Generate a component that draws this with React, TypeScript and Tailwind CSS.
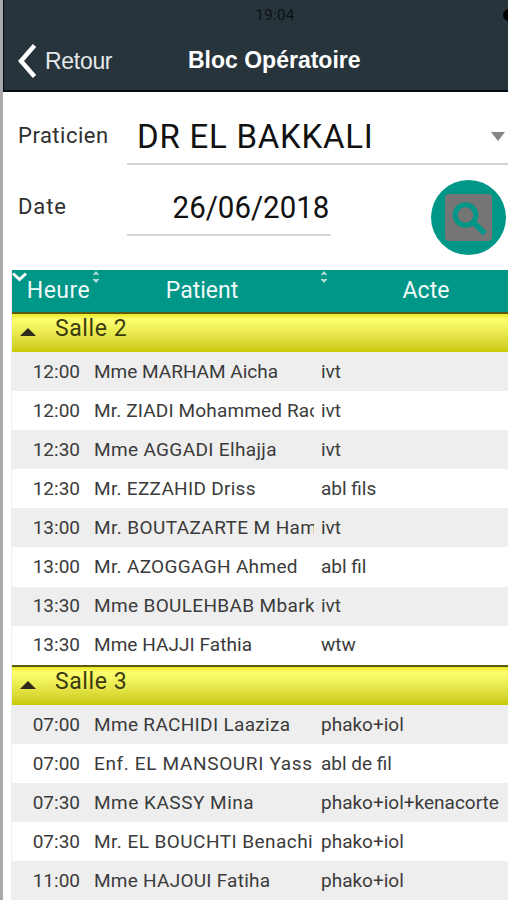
import clsx from 'clsx';

type Entry = {
  time: string;
  patient: string;
  act: string;
  tracking?: string;
};

const rooms: { name: string; entries: Entry[] }[] = [
  {
    name: 'Salle 2',
    entries: [
      { time: '12:00', patient: 'Mme MARHAM Aicha', act: 'ivt' },
      { time: '12:00', patient: 'Mr. ZIADI Mohammed Rac', act: 'ivt', tracking: 'tracking-[0.15px]' },
      { time: '12:30', patient: 'Mme AGGADI Elhajja', act: 'ivt', tracking: 'tracking-[0.35px]' },
      { time: '12:30', patient: 'Mr. EZZAHID Driss', act: 'abl fils', tracking: 'tracking-[0.3px]' },
      { time: '13:00', patient: 'Mr. BOUTAZARTE M Ham', act: 'ivt', tracking: 'tracking-[0.4px]' },
      { time: '13:00', patient: 'Mr. AZOGGAGH Ahmed', act: 'abl fil', tracking: 'tracking-[0.33px]' },
      { time: '13:30', patient: 'Mme BOULEHBAB Mbark', act: 'ivt', tracking: 'tracking-[0.35px]' },
      { time: '13:30', patient: 'Mme HAJJI Fathia', act: 'wtw', tracking: 'tracking-[0.06px]' },
    ],
  },
  {
    name: 'Salle 3',
    entries: [
      { time: '07:00', patient: 'Mme RACHIDI Laaziza', act: 'phako+iol', tracking: 'tracking-[0.33px]' },
      { time: '07:00', patient: 'Enf. EL MANSOURI Yass', act: 'abl de fil', tracking: 'tracking-[0.65px]' },
      { time: '07:30', patient: 'Mme KASSY Mina', act: 'phako+iol+kenacorte', tracking: 'tracking-[0.5px]' },
      { time: '07:30', patient: 'Mr. EL BOUCHTI Benachi', act: 'phako+iol', tracking: 'tracking-[0.45px]' },
      { time: '11:00', patient: 'Mme HAJOUI Fatiha', act: 'phako+iol', tracking: 'tracking-[0.25px]' },
    ],
  },
];

function SortArrows({ className }: { className: string }) {
  return (
    <svg className={clsx('absolute h-3 w-2', className)} viewBox="0 0 8 12" fill="#b9e2dc">
      <path d="M4 0 7.2 4H5L4 3 3 4H.8Z" />
      <path d="M4 12 7.5 8H5L4 8.500 3 8H.5Z" />
    </svg>
  );
}

function Header() {
  return (
    <header className="ml-[2px] flex h-[92px] shrink-0 flex-col border-b-2 border-l-2 border-[#020a12] bg-[#27343b]">
      <div className="relative flex h-[30px] items-center justify-center pl-[38px]">
        <span className="text-[15px] tracking-[0.3px] text-[#0c1215]">19:04</span>
        <span className="absolute top-[9px] -right-[7px] h-3 w-3 rounded-full bg-black" />
      </div>
      <div className="flex h-[60px] items-center">
        <svg className="mt-[2px] ml-[13px] h-[36px] w-[20px]" viewBox="0 0 20 36" fill="none">
          <path d="M17.500 2.500 4 18l13.500 15.500" stroke="#fff" strokeWidth="4.500" />
        </svg>
        <span className="mt-[2px] ml-[8px] w-[143px] font-['Liberation_Sans',sans-serif] text-[23px] tracking-[-0.3px] text-[#e4e8ea]">
          Retour
        </span>
        <h1 className="font-['Liberation_Sans',sans-serif] text-[23px] font-bold whitespace-nowrap text-white">
          Bloc Opératoire
        </h1>
      </div>
    </header>
  );
}

function Filters() {
  return (
    <div className="flex h-[178px] shrink-0 pl-[18px] text-[#303030]">
      <div className="w-[109px] text-[22px]">
        <div className="flex h-[86px] items-center tracking-[0.5px]">Praticien</div>
        <div className="flex h-[56px] items-center tracking-[0.9px]">Date</div>
      </div>
      <div className="flex flex-1 flex-col text-[#111]">
        <div className="flex h-[73px] items-center justify-between border-b-2 border-[#d4d4d4] pt-[18px] pr-[3px] pl-[10px]">
          <span className="text-[33px] tracking-[0.75px] whitespace-nowrap">DR EL BAKKALI</span>
          <svg className="h-[9px] w-[14px]" viewBox="0 0 14 9" fill="#858585">
            <path d="M0 0h14L7 9Z" />
          </svg>
        </div>
        <div className="flex justify-between">
          <div className="flex h-[71px] w-[204px] items-center justify-end border-b-2 border-[#d4d4d4] pt-[14px] pr-[2px] text-[32px]">
            <span className="origin-right scale-x-[0.92]">26/06/2018</span>
          </div>
          <button className="mt-[14.5px] mr-[2px] flex h-[75px] w-[75px] items-center justify-center rounded-full bg-[#009688]">
            <svg className="h-[47px] w-[47px]" viewBox="0 0 47 47" fill="none">
              <rect width="47" height="47" rx="4" fill="#757575" />
              <circle cx="20.500" cy="21" r="10.300" stroke="#009688" strokeWidth="5" />
              <path d="m28 28 12 11.500" stroke="#009688" strokeWidth="5.500" />
            </svg>
          </button>
        </div>
      </div>
    </div>
  );
}

function Row({ entry, odd }: { entry: Entry; odd: boolean }) {
  return (
    <div
      className={clsx(
        'flex h-[39.1px] items-center pt-px text-[19px] whitespace-nowrap text-[#3b3b3b]',
        odd ? 'bg-white' : 'bg-[#eeeeee]',
      )}
    >
      <span className="w-[68px] text-right">{entry.time}</span>
      <span className={clsx('ml-[14px] w-[220px] overflow-hidden', entry.tracking)}>{entry.patient}</span>
      <span className="ml-[7px]">{entry.act}</span>
    </div>
  );
}

export default function App() {
  return (
    <div className="flex h-[900px] w-[508px] flex-col overflow-hidden border-l-[3px] border-[#aaaaaa] bg-white font-['Roboto',sans-serif]">
      <div className="-ml-[3px] flex shrink-0 flex-col">
        <Header />
        <Filters />
      </div>
      <div className="ml-[8px] flex shrink-0 flex-col border-l border-[#eeeeee]">
        <div className="relative flex h-[42px] items-center bg-[#009688] text-[23px] text-[#f0faf8]">
          <svg className="absolute top-[2px] left-0 h-[10px] w-[15px]" viewBox="0 0 15 10" fill="none">
            <path d="m1 1.500 6.500 6 6.500-6" stroke="#fff" strokeWidth="3" />
          </svg>
          <SortArrows className="top-[1px] left-[80px]" />
          <SortArrows className="top-[1px] left-[308px]" />
          <span className="w-[92px] pl-px text-center tracking-[0.5px]">Heure</span>
          <span className="w-[196px] text-center">Patient</span>
          <span className="flex-1 pl-[44px] text-center">Acte</span>
        </div>
        {rooms.map((room) => (
          <section key={room.name}>
            <div className="flex h-[40px] items-center border-t-2 border-[#5c5a10] bg-linear-to-b from-[#e8e820] via-[#ffff6e] via-15% to-[#c9c900] pb-[7px] pl-[8px] text-[23px] text-[#3a3a10]">
              <svg className="mt-[5px] h-[8px] w-[16px]" viewBox="0 0 16 8" fill="#2e2a1c">
                <path d="M0 8 8 0l8 8Z" />
              </svg>
              <span className="ml-[19px] tracking-[0.6px]">{room.name}</span>
            </div>
            {room.entries.map((entry, i) => (
              <Row key={i} entry={entry} odd={i % 2 === 1} />
            ))}
          </section>
        ))}
      </div>
    </div>
  );
}
